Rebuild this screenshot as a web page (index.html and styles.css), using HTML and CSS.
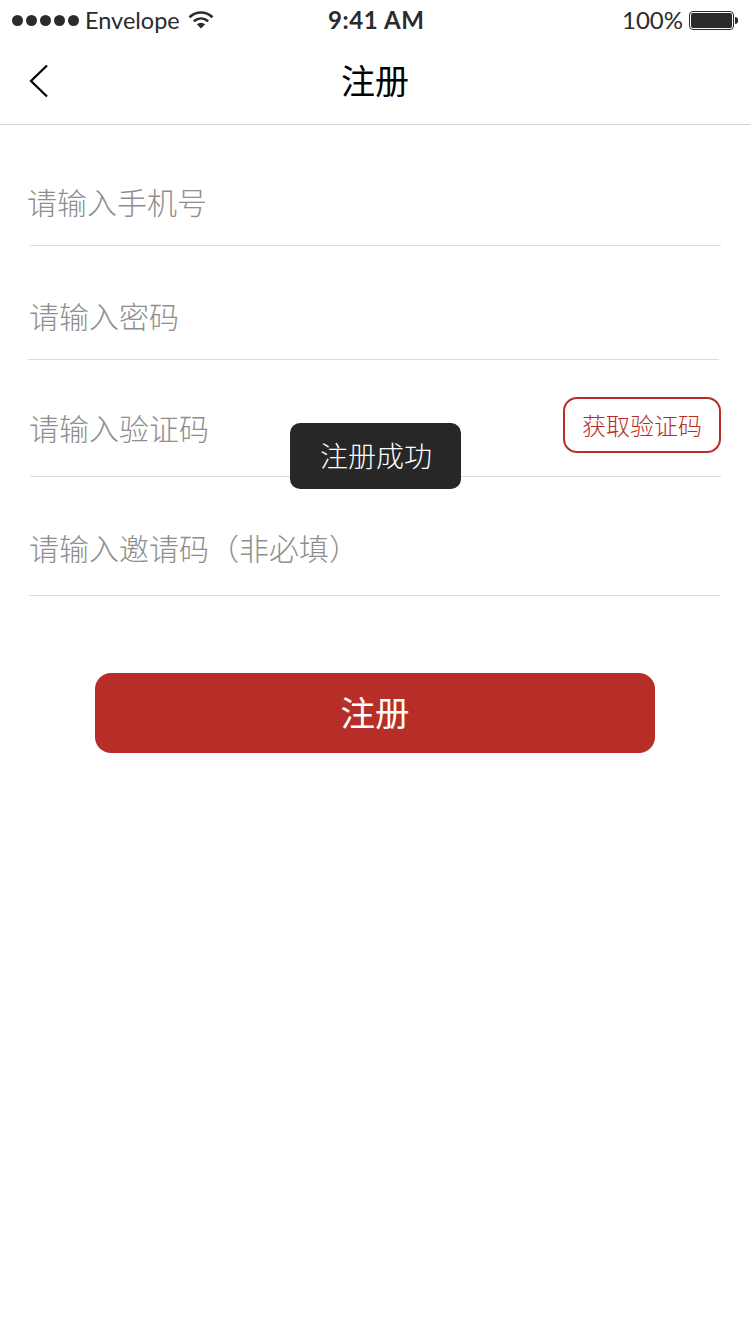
FILE: index.html
```html
<!DOCTYPE html>
<html lang="zh-CN">
<head>
<meta charset="utf-8">
<title>注册</title>
<link rel="stylesheet" href="styles.css">
</head>
<body>
<div class="status">
  <div class="status-left">
    <div class="dots"><i></i><i></i><i></i><i></i><i></i></div>
    <span class="carrier">Envelope</span>
    <svg class="wifi" width="26" height="19" viewBox="0 0 26 19"><path d="M1.5 7.2C8.4 1 17.6 1 24.5 7.2" fill="none" stroke="#2b2b2b" stroke-width="2.6"/><path d="M5.8 11.2C10.2 7.5 15.8 7.5 20.2 11.2" fill="none" stroke="#2b2b2b" stroke-width="2.6"/><path d="M8.8 14.2C11.5 12.2 14.5 12.2 17.2 14.2L13 18.4Z" fill="#2b2b2b"/></svg>
  </div>
  <span class="time">9:41 AM</span>
  <div class="status-right">
    <span class="pct">100%</span>
    <div class="battery"><div class="battery-fill"></div></div>
    <div class="battery-tip"></div>
  </div>
</div>
<header class="nav">
  <svg class="back" width="20" height="34" viewBox="0 0 20 34"><path d="M18 1.5L2 17L18 32.5" fill="none" stroke="#000" stroke-width="2.2"/></svg>
  <h1 class="title">注册</h1>
</header>
<main>
  <div class="row row-phone"><span class="ph">请输入手机号</span></div>
  <div class="row row-pass"><span class="ph">请输入密码</span></div>
  <div class="row row-code"><span class="ph">请输入验证码</span><button class="code-btn">获取验证码</button></div>
  <div class="row row-invite"><span class="ph">请输入邀请码（非必填）</span></div>
  <div class="submit-wrap"><button class="submit">注册</button></div>
</main>
<div class="toast">注册成功</div>
</body>
</html>
```
FILE: styles.css
```css
* { box-sizing: border-box; }
html, body { margin: 0; padding: 0; }
body {
  position: relative;
  width: 750px;
  height: 1334px;
  overflow: hidden;
  background: #fff;
  font-family: "Noto Sans CJK SC", "Noto Sans", sans-serif;
  font-weight: 300;
}
.status {
  height: 40px;
  display: flex;
  align-items: center;
  justify-content: space-between;
  padding: 0 12px;
  color: #2b2b2b;
  position: relative;
}
.status-left, .status-right { display: flex; align-items: center; }
.dots { display: flex; gap: 3px; }
.dots i { width: 11px; height: 11px; border-radius: 50%; background: #2b2b2b; }
.carrier { font: 400 23.5px/30px Lato, sans-serif; margin-left: 6px; }
.wifi { margin-left: 8px; margin-top: -1px; }
.time {
  position: absolute;
  left: 328px;
  top: 5px;
  font: 700 24px/30px Lato, sans-serif;
  letter-spacing: .6px;
}
.pct { font: 400 24px/30px Lato, sans-serif; margin-right: 6px; }
.battery { width: 45px; height: 19px; border: 1px solid #2b2b2b; border-radius: 4px; padding: 1px; }
.battery-fill { height: 100%; background: #2b2b2b; border-radius: 2px; }
.battery-tip { width: 3px; height: 7px; background: #2b2b2b; border-radius: 0 3px 3px 0; margin-left: 1px; }
.nav {
  height: 85px;
  border-bottom: 1px solid #d2d2d2;
  display: flex;
  align-items: center;
  justify-content: center;
  position: relative;
}
.back { position: absolute; left: 29px; top: 24px; }
.title { margin: 0 0 5px; font-size: 34px; font-weight: 400; color: #000; line-height: 44px; }
.row {
  width: 691px;
  border-bottom: 1px solid #dcdcdc;
  display: flex;
  align-items: center;
  justify-content: space-between;
  position: relative;
}
.ph { font-size: 30px; line-height: 42px; color: #8e8e8e; }
.row-phone { height: 121px; margin-left: 30px; padding-top: 32px; }
.row-phone .ph { margin-left: -3px; }
.row-pass { height: 114px; margin-left: 28px; padding: 25px 0 0 1px; }
.row-code { height: 117px; margin-left: 30px; }
.row-code .ph { margin-top: 18px; margin-left: -1px; }
.row-invite { height: 119px; margin-left: 29px; padding: 22px 0 0 0; }
.code-btn {
  width: 158px;
  height: 56px;
  margin-top: 13px;
  border: 2px solid #b72e28;
  border-radius: 14px;
  background: #fff;
  color: #b72e28;
  font: 300 24px/30px "Noto Sans CJK SC", sans-serif;
  padding: 0;
}
.submit-wrap { display: flex; justify-content: center; padding-top: 77px; }
.submit {
  width: 560px;
  height: 80px;
  border: 0;
  border-radius: 16px;
  background: #b72e28;
  color: #fff;
  font: 400 34.5px/44px "Noto Sans CJK SC", sans-serif;
  padding: 0 0 4px;
}
.toast {
  position: absolute;
  left: 290px;
  top: 423px;
  width: 171px;
  height: 66px;
  border-radius: 10px;
  background: #272727;
  color: #fff;
  font-size: 28px;
  line-height: 64px;
  padding-left: 1px;
  text-align: center;
}
```
